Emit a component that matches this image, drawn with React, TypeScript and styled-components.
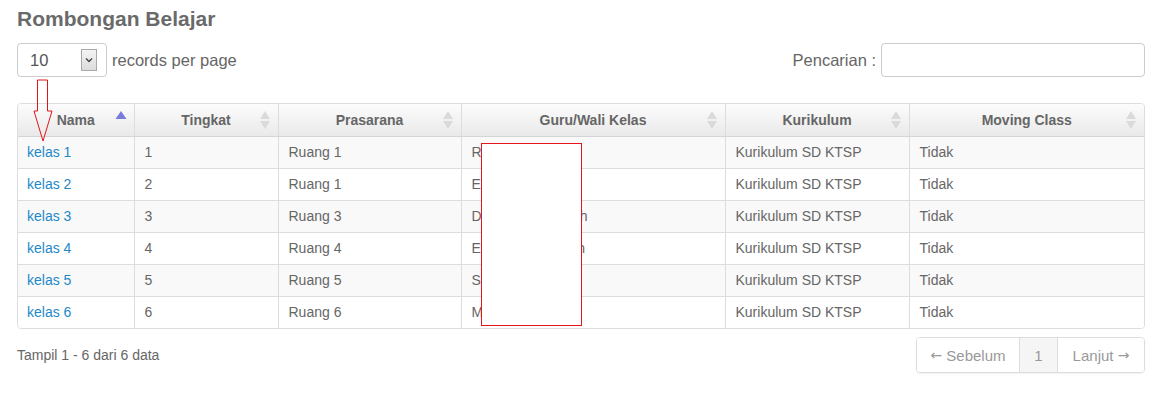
import React from "react";
import styled, { createGlobalStyle } from "styled-components";

const Global = createGlobalStyle`
  html, body { margin: 0; padding: 0; background: #fff; }
  body { font-family: "Liberation Sans", Arial, sans-serif; color: #666; }
`;

const Page = styled.div`
  position: relative;
  width: 1169px;
  height: 395px;
  box-sizing: border-box;
  padding: 7px 24px 0 17px;
`;

const Title = styled.h2`
  margin: 0;
  font-size: 21px;
  line-height: 23px;
  font-weight: bold;
  color: #6a6a6a;
`;

const Toolbar = styled.div`
  display: flex;
  justify-content: space-between;
  align-items: center;
  margin-top: 13px;
  height: 34px;
`;

const LengthGroup = styled.div`
  display: flex;
  align-items: center;
  gap: 5px;
  font-size: 16.5px;
  color: #666;
`;

const SelectBox = styled.div`
  width: 90px;
  height: 34px;
  box-sizing: border-box;
  border: 1px solid #ccc;
  border-radius: 4px;
  display: flex;
  align-items: center;
  justify-content: space-between;
  padding: 0 9px 0 12px;
  font-size: 16.5px;
  color: #555;
  background: #fff;
`;

const DropBtn = styled.div`
  width: 16px;
  height: 22px;
  box-sizing: border-box;
  border: 1px solid #a9a9a9;
  background: linear-gradient(#f4f4f4, #dcdcdc);
  display: flex;
  align-items: center;
  justify-content: center;
`;

const SearchGroup = styled.label`
  display: flex;
  align-items: center;
  gap: 5px;
  font-size: 16.5px;
  color: #666;
`;

const SearchInput = styled.div`
  width: 264px;
  height: 34px;
  box-sizing: border-box;
  border: 1px solid #ccc;
  border-radius: 4px;
  background: #fff;
`;

const TableWrap = styled.div`
  margin-top: 26px;
  border: 1px solid #ddd;
  border-radius: 4px;
  overflow: hidden;
  width: 1128px;
  box-sizing: border-box;
`;

const Table = styled.table`
  width: 100%;
  border-collapse: collapse;
  table-layout: fixed;
  font-size: 14px;
`;

const Th = styled.th`
  position: relative;
  height: 32px;
  padding: 0 10px;
  box-sizing: border-box;
  text-align: center;
  font-weight: bold;
  color: #666;
  background: linear-gradient(#fcfcfc, #e9e9e9);
  border-left: 1px solid #ddd;
  border-bottom: 1px solid #d5d5d5;
  &:first-child { border-left: none; }
`;

const Tr = styled.tr<{ $striped: boolean }>`
  background: ${(p) => (p.$striped ? "#f9f9f9" : "#fff")};
`;

const Td = styled.td`
  height: 32px;
  padding: 0 9px 0 10px;
  box-sizing: border-box;
  border-left: 1px solid #ddd;
  border-top: 1px solid #ddd;
  color: #666;
  white-space: nowrap;
  overflow: hidden;
  &:first-child { border-left: none; padding-left: 9px; }
`;

const Link = styled.a`
  color: #1e88c9;
  text-decoration: none;
`;

const SortIcon = styled.svg`
  position: absolute;
  right: 7px;
  top: 6px;
`;

const Footer = styled.div`
  display: flex;
  justify-content: space-between;
  align-items: center;
  margin-top: 8px;
  width: 1128px;
`;

const Info = styled.div`
  font-size: 14px;
  color: #666;
`;

const Pager = styled.div`
  display: flex;
  height: 36px;
  border: 1px solid #ddd;
  border-radius: 4px;
  box-shadow: 0 1px 2px rgba(0, 0, 0, 0.06);
  overflow: hidden;
  box-sizing: border-box;
`;

const PageBtn = styled.div<{ $active?: boolean; $w: number }>`
  width: ${(p) => p.$w}px;
  box-sizing: border-box;
  display: flex;
  align-items: center;
  justify-content: center;
  font-size: 15px;
  color: #999;
  background: ${(p) => (p.$active ? "#f5f5f5" : "#fff")};
  border-left: 1px solid #ddd;
  &:first-child { border-left: none; }
`;

const Arrow = styled.span`
  font-family: "DejaVu Sans", sans-serif;
  font-size: 14px;
`;

const Mask = styled.div`
  position: absolute;
  left: 481px;
  top: 143px;
  width: 101px;
  height: 183px;
  box-sizing: border-box;
  background: #fff;
  border: 1px solid #e4151f;
`;

const ArrowSvg = styled.svg`
  position: absolute;
  left: 32px;
  top: 79px;
`;

const cols = [
  { name: "Nama", w: 116, active: true },
  { name: "Tingkat", w: 144 },
  { name: "Prasarana", w: 183 },
  { name: "Guru/Wali Kelas", w: 264 },
  { name: "Kurikulum", w: 184 },
  { name: "Moving Class", w: 235 },
];

const rows = [
  ["kelas 1", "1", "Ruang 1", "Rina Marlina"],
  ["kelas 2", "2", "Ruang 1", "Eka Putri"],
  ["kelas 3", "3", "Ruang 3", "Dewi Nur Khodijah"],
  ["kelas 4", "4", "Ruang 4", "Evie Nur Hasanah"],
  ["kelas 5", "5", "Ruang 5", "Sri Wahyuni"],
  ["kelas 6", "6", "Ruang 6", "Maria Ulfa"],
];

const Sort = ({ active }: { active?: boolean }) =>
  active ? (
    <SortIcon width="12" height="20" viewBox="0 0 12 20">
      <polygon points="0.5,9 6,1 11.5,9" fill="#7b7bd8" />
    </SortIcon>
  ) : (
    <SortIcon width="12" height="20" viewBox="0 0 12 20">
      <polygon points="1,9 6,1 11,9" fill="#dadada" />
      <polygon points="1,11 6,19 11,11" fill="#dadada" />
    </SortIcon>
  );

export default function App() {
  return (
    <>
      <Global />
      <Page>
        <Title>Rombongan Belajar</Title>
        <Toolbar>
          <LengthGroup>
            <SelectBox>
              <span>10</span>
              <DropBtn>
                <svg width="8" height="6" viewBox="0 0 8 6">
                  <polyline points="1,1.5 4,4.5 7,1.5" fill="none" stroke="#444" strokeWidth="1.4" />
                </svg>
              </DropBtn>
            </SelectBox>
            <span>records per page</span>
          </LengthGroup>
          <SearchGroup>
            <span>Pencarian :</span>
            <SearchInput />
          </SearchGroup>
        </Toolbar>
        <TableWrap>
          <Table>
            <colgroup>
              {cols.map((c) => (
                <col key={c.name} style={{ width: c.w }} />
              ))}
            </colgroup>
            <thead>
              <tr>
                {cols.map((c) => (
                  <Th key={c.name}>
                    {c.name}
                    <Sort active={c.active} />
                  </Th>
                ))}
              </tr>
            </thead>
            <tbody>
              {rows.map((r, i) => (
                <Tr key={r[0]} $striped={i % 2 === 0}>
                  <Td>
                    <Link href="#">{r[0]}</Link>
                  </Td>
                  <Td>{r[1]}</Td>
                  <Td>{r[2]}</Td>
                  <Td>{r[3]}</Td>
                  <Td>Kurikulum SD KTSP</Td>
                  <Td>Tidak</Td>
                </Tr>
              ))}
            </tbody>
          </Table>
        </TableWrap>
        <Footer>
          <Info>Tampil 1 - 6 dari 6 data</Info>
          <Pager>
            <PageBtn $w={102}>
              <Arrow>←</Arrow>&nbsp;Sebelum
            </PageBtn>
            <PageBtn $w={38} $active>
              1
            </PageBtn>
            <PageBtn $w={87}>
              Lanjut&nbsp;<Arrow>→</Arrow>
            </PageBtn>
          </Pager>
        </Footer>
        <Mask />
        <ArrowSvg width="24" height="64" viewBox="0 0 24 64">
          <polygon
            points="5.5,1 15.5,1 15.5,32 20,32 11,62 2,32 5.5,32"
            fill="none"
            stroke="#e0141b"
            strokeWidth="1"
          />
        </ArrowSvg>
      </Page>
    </>
  );
}
